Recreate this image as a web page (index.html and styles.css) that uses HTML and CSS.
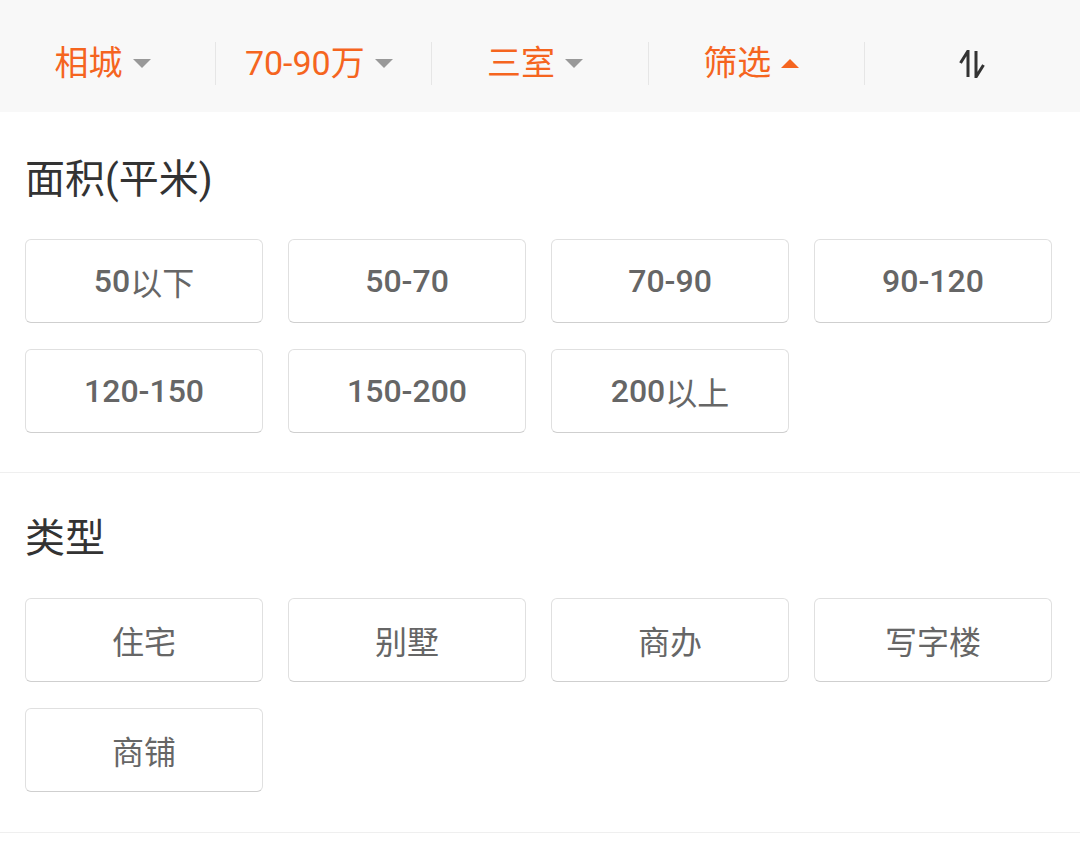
FILE: index.html
```html
<!DOCTYPE html>
<html>
<head>
    <meta http-equiv="Content-Type" content="text/html; charset=utf-8" />
    <title>筛选</title>
    <link rel="stylesheet" href="styles.css">
</head>
<body>

<!--顶部筛选栏-->
<div class="filter-bar">
    <div class="filter-tab">
        <span class="filter-tab-label">相城</span>
        <i class="filter-caret"></i>
    </div>
    <div class="filter-tab">
        <span class="filter-tab-label">70-90万</span>
        <i class="filter-caret"></i>
    </div>
    <div class="filter-tab">
        <span class="filter-tab-label">三室</span>
        <i class="filter-caret"></i>
    </div>
    <div class="filter-tab">
        <span class="filter-tab-label">筛选</span>
        <i class="filter-caret filter-caret-up"></i>
    </div>
    <div class="filter-tab">
        <svg class="filter-sort" width="28" height="28" viewBox="0 0 28 28">
            <path d="M10 27 V1 L2.5 13" fill="none" stroke="#333" stroke-width="3" stroke-linejoin="miter"/>
            <path d="M18 1 V27 L25.5 15" fill="none" stroke="#333" stroke-width="3" stroke-linejoin="miter"/>
        </svg>
    </div>
</div>

<!--面积-->
<div class="filter-section">
    <div class="filter-section-title">面积(平米)</div>
    <div class="filter-options">
        <a href="#" class="filter-option"><b>50</b>以下</a>
        <a href="#" class="filter-option"><b>50-70</b></a>
        <a href="#" class="filter-option"><b>70-90</b></a>
        <a href="#" class="filter-option"><b>90-120</b></a>
        <a href="#" class="filter-option"><b>120-150</b></a>
        <a href="#" class="filter-option"><b>150-200</b></a>
        <a href="#" class="filter-option"><b>200</b>以上</a>
    </div>
</div>

<!--类型-->
<div class="filter-section">
    <div class="filter-section-title">类型</div>
    <div class="filter-options">
        <a href="#" class="filter-option">住宅</a>
        <a href="#" class="filter-option">别墅</a>
        <a href="#" class="filter-option">商办</a>
        <a href="#" class="filter-option">写字楼</a>
        <a href="#" class="filter-option">商铺</a>
    </div>
</div>

</body>
</html>
```

FILE: styles.css
```css
body{
    padding: 0px;margin: 0px;background: #fff;
    font-family: Roboto, "Noto Sans CJK SC", sans-serif;
}

a{text-decoration: none;}

/*顶部筛选栏*/
.filter-bar{
    height: 112px;box-sizing: border-box;padding-top: 15px;
    display: flex;align-items: center;
    background: #f8f8f8;
}
.filter-tab{
    flex: 1;height: 43px;
    display: flex;align-items: center;justify-content: center;
}
.filter-tab + .filter-tab{
    border-left: 1px solid #e6e6e6;
}
.filter-tab-label{
    font-size: 34px;color: #f5651f;line-height: 43px;
}

/*下拉三角*/
.filter-caret{
    width: 0;height: 0;display: block;
    margin-left: 10px;margin-right: 10px;
    border-left: 9px solid transparent;border-right: 9px solid transparent;
    border-top: 9px solid #999;
}
.filter-caret-up{
    border-top: none;border-bottom: 9px solid #f5651f;
}
.filter-sort{display: block;}

/*条件区块*/
.filter-section{
    padding: 44px 28px 39px 25px;
    border-bottom: 1px solid #efefef;
}
.filter-section + .filter-section{
    padding-top: 42px;padding-bottom: 40px;
}
.filter-section-title{
    font-size: 40px;line-height: 48px;color: #333;
    margin-bottom: 35px;
}
.filter-options{
    display: grid;grid-template-columns: repeat(4, 1fr);
    column-gap: 25px;row-gap: 26px;
}
.filter-option{
    height: 84px;box-sizing: border-box;
    display: flex;align-items: center;justify-content: center;
    border: 1px solid #e0e0e0;border-bottom-color: #cfcfcf;border-radius: 6px;
    background: #fff;
    font-size: 32px;color: #666;
}
.filter-option b{font-weight: 500;}
```
